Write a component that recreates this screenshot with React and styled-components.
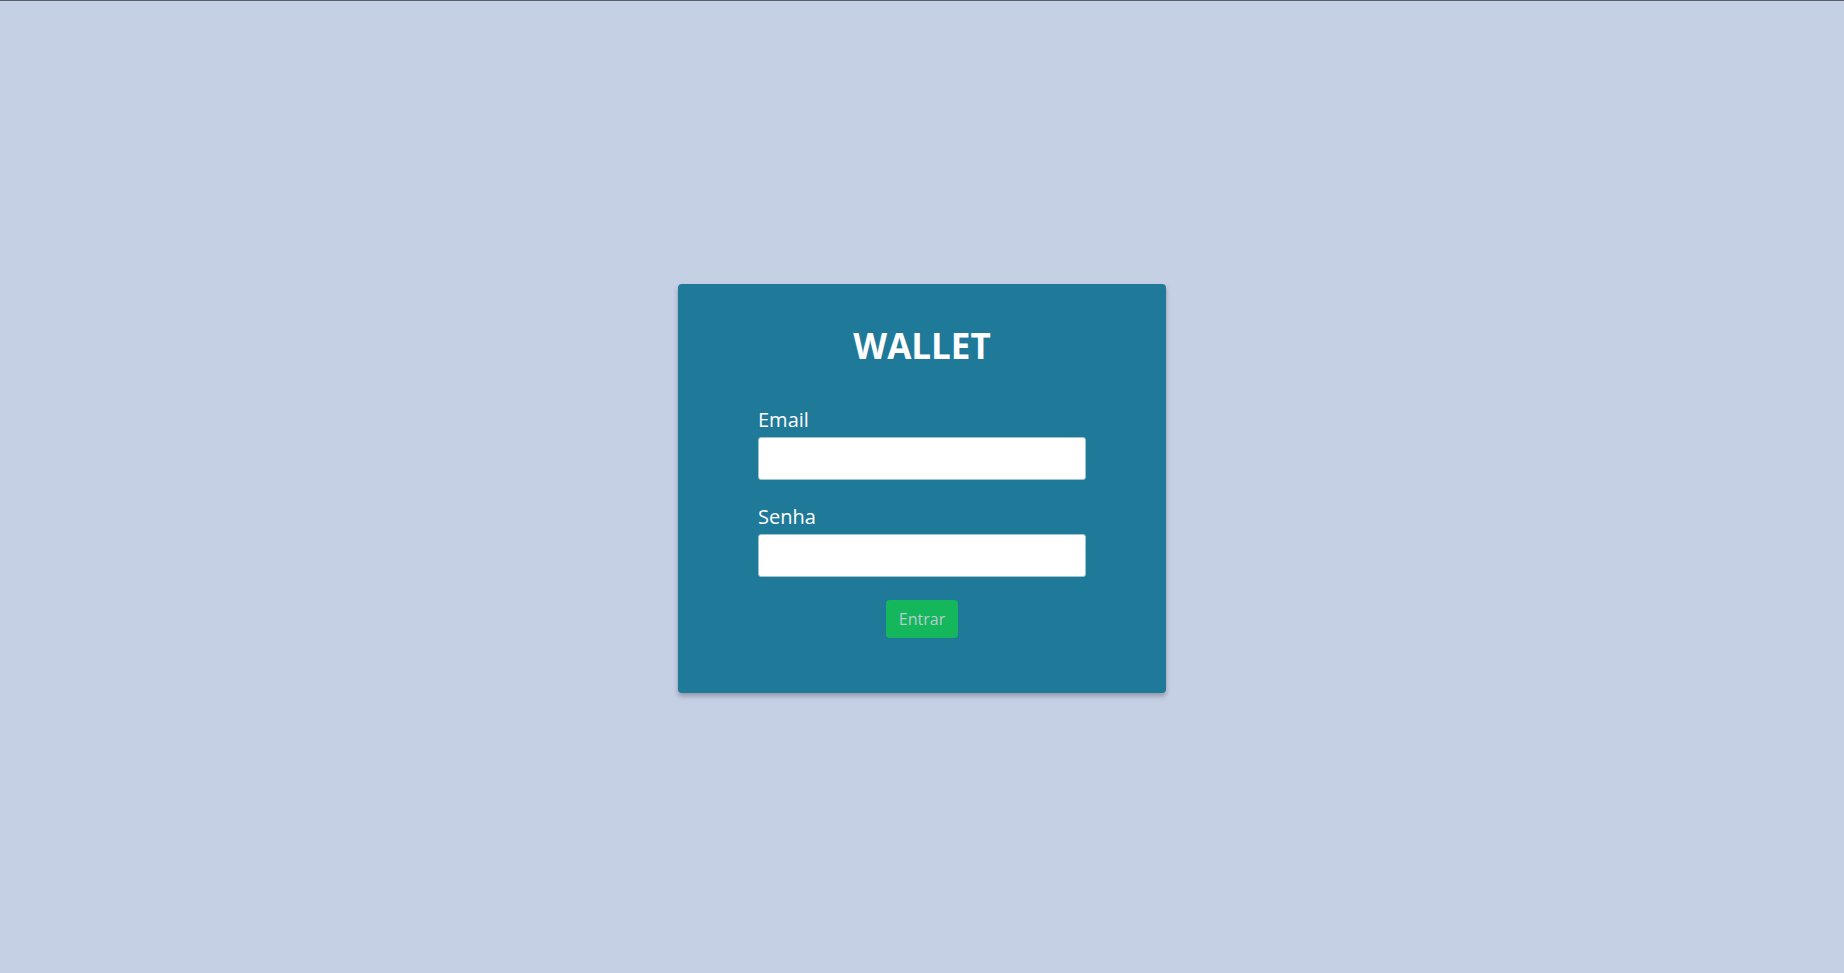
import React from 'react';
import styled, { createGlobalStyle } from 'styled-components';

const GlobalStyle = createGlobalStyle`
    html, body {
        margin: 0;
        padding: 0;
    }
    body {
        font-family: "Open Sans", "DejaVu Sans", sans-serif;
    }
`;

const StyledPage = styled.main`
    display: flex;
    align-items: center;
    justify-content: center;
    box-sizing: border-box;
    height: 973px;
    background: #c6d0e4;
    border-top: 1px solid #5b5e66;
    padding-top: 3px;
`;

const StyledCard = styled.section`
    display: flex;
    flex-direction: column;
    align-items: center;
    box-sizing: border-box;
    width: 488px;
    height: 409px;
    background: #1f7999;
    border-radius: 4px;
    box-shadow: 0 3px 5px rgb(0 0 0 / 28%);
`;

const StyledTitle = styled.h1`
    margin: 44px 0 0;
    font-size: 35px;
    line-height: 1;
    font-weight: 700;
    color: #ffffff;
`;

const StyledForm = styled.form`
    display: flex;
    flex-direction: column;
    width: 328px;
    margin-top: 47px;
`;

const StyledLabel = styled.label`
    font-size: 20px;
    line-height: 1;
    color: #ffffff;
    margin-top: ${props => (props.first ? '0' : '27px')};
`;

const StyledInput = styled.input`
    box-sizing: border-box;
    width: 100%;
    height: 43px;
    margin-top: 7px;
    background: #ffffff;
    border: 1px solid #9fc3d3;
    border-radius: 3px;
    outline: none;
`;

const StyledButton = styled.button`
    align-self: center;
    width: 72px;
    height: 38px;
    margin-top: 23px;
    border: none;
    border-radius: 4px;
    background: #14b75c;
    color: #b9cbd2;
    font-family: "Open Sans", "DejaVu Sans", sans-serif;
    font-size: 16px;
    cursor: pointer;
`;

export default function App() {
    return (
        <>
            <GlobalStyle />
            <StyledPage>
                <StyledCard>
                    <StyledTitle>WALLET</StyledTitle>
                    <StyledForm onSubmit={e => e.preventDefault()}>
                        <StyledLabel first htmlFor="email">Email</StyledLabel>
                        <StyledInput id="email" type="email" />
                        <StyledLabel htmlFor="senha">Senha</StyledLabel>
                        <StyledInput id="senha" type="password" />
                        <StyledButton type="submit" disabled>Entrar</StyledButton>
                    </StyledForm>
                </StyledCard>
            </StyledPage>
        </>
    );
}
